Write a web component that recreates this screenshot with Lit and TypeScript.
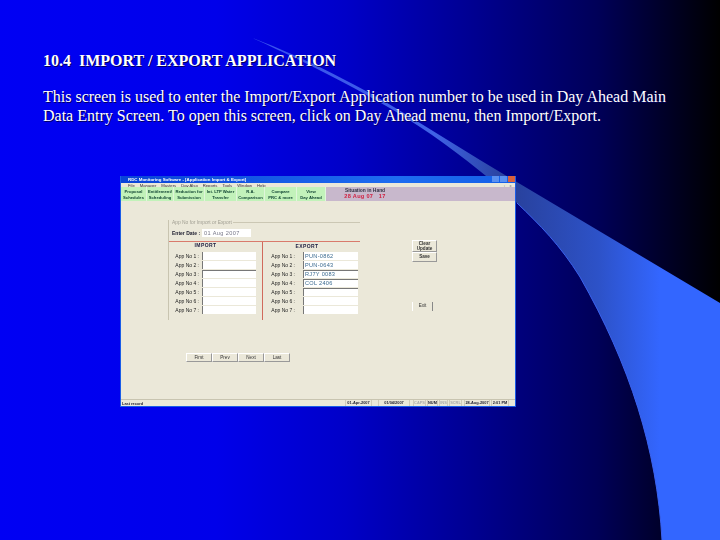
import { LitElement, html, css, svg } from "lit";
import { customElement } from "lit/decorators.js";

const tabs = [
  ["Proposal", "Schedules", 26],["Entitlement/", "Scheduling", 27],["Reduction for", "Submission", 31],["Int. LTP Water", "Transfer", 32],["R.A.", "Comparison", 28],["Compare", "PRC & more", 32],["View", "Day Ahead", 29],
] as const;
const imp = [1,2,3,4,5,6,7];
const exp = ["PUN-0862","PUN-0643","RJ7Y 0083","COL 2406","","",""];
const menus = ["File","Manager","Masters","Day Also","Reports","Tools","Window","Help"];
const stat = [
  ["01-Apr-2007", 27, 0, 0],["01/04/2007", 32, 6, 0],["CAPS", 13, 3, 1],["NUM", 11, 1, 0],["INS", 9, 1, 1],["SCRL", 13, 1, 1],["28-Aug-2007", 26, 2, 0],["2:01 PM", 18, 1, 0],
] as const;

@customElement("app-root")
export class AppRoot extends LitElement {
  static styles = css`
    :host { display: block; }
    .slide { position: relative; width: 720px; height: 540px; overflow: hidden; background: linear-gradient(90deg,#0000f4 0%,#0000ea 30%,#0000c8 48%,#000090 66%,#000058 83%,#000000 100%); font-family: "Liberation Serif", serif; color: #fff; box-sizing: border-box; padding: 52px 0 0 43px; }
    .bg { position: absolute; inset: 0; width: 720px; height: 540px; }
    .txt { position: relative; }
    h1 { margin: 0; font-size: 16px; line-height: 18px; font-weight: bold; text-shadow: 1px 1px 0 #000060; }
    p { margin: 18px 0 0; font-size: 16px; line-height: 18.5px; width: 630px; text-shadow: 1px 1px 0 #000060; }
    .win { position: absolute; left: 120px; top: 176px; width: 396px; height: 231px; background: #ebe8d9; font-family: "Liberation Sans", sans-serif; color: #223; display: flex; flex-direction: column; box-sizing: border-box; border: solid #1a5ce8; border-width: 0 1px 1px 1px; filter: blur(0.3px); }
    .title { height: 7px; background: linear-gradient(90deg,#0a44d8,#1e6cf0 70%,#1560e8); color: #fff; font-size: 4.4px; line-height: 7px; font-weight: bold; padding-left: 7px; display: flex; justify-content: space-between; flex: none; }
    .ctl { display: flex; gap: 1px; }
    .ctl i { width: 7px; height: 6px; background: #5a90f0; display: block; }
    .ctl i:last-child { background: #d9603c; }
    .menu { height: 4px; flex: none; font-size: 4.2px; line-height: 5px; display: flex; gap: 5px; padding-left: 7px; background: #ebe8d9; color: #333; white-space: nowrap; }
    .mini { margin-left: auto; padding-right: 2px; color: #777; letter-spacing: 1.5px; }
    .tabs { height: 14px; flex: none; background: #c8b8cc; display: flex; align-items: stretch; }
    .tab { background: #c2f2ba; border: solid #dff5da; border-width: 0 1px 0 0; box-sizing: border-box; font-size: 4.2px; line-height: 5.6px; text-align: center; color: #143; padding-top: 2px; font-weight: bold; white-space: nowrap; overflow: hidden; }
    .info { width: 48px; margin-left: 15px; text-align: center; font-size: 4.9px; line-height: 5.5px; color: #334; font-weight: bold; padding-top: 1px; white-space: nowrap; }
    .info b { display: block; color: #d02040; font-size: 5.6px; letter-spacing: .3px; }
    .body { flex: 1; display: flex; min-height: 0; padding: 19px 0 0 47px; box-sizing: border-box; position: relative; }
    .form { width: 192px; height: 100px; border-left: 1px solid #c8c4b0; display: flex; flex-direction: column; box-sizing: border-box; }
    .legend { font-size: 4.9px; line-height: 5px; color: #a09e92; display: flex; align-items: center; gap: 1px; white-space: nowrap; margin-left: 3px; }
    .legend::after { content: ""; flex: 1; height: 1px; background: #cbc7b4; }
    .date { display: flex; align-items: center; font-size: 5px; gap: 2px; margin: 4px 0 0 3px; height: 8px; font-weight: bold; white-space: nowrap; }
    .date span { background: #fff; width: 49px; height: 8px; line-height: 8px; font-size: 5.6px; color: #778; font-weight: normal; padding-left: 2px; letter-spacing: .4px; box-sizing: border-box; }
    .cols { flex: 1; display: grid; grid-template-columns: 93px 1fr; border-top: 1px solid #d97a6c; margin-top: 4px; }
    .col + .col { border-left: 1px solid #d06a5c; }
    .col h2 { margin: 0 0 3px; padding-right: 20px; height: 6px; font-size: 5px; line-height: 6px; color: #224; text-align: center; font-weight: bold; letter-spacing: .4px; }
    .col + .col h2 { padding-right: 9px; margin-top: 1px; margin-bottom: 2px; }
    .row { display: flex; align-items: center; height: 9px; font-size: 5px; color: #222; }
    .row label { width: 30px; text-align: right; margin-right: 3px; white-space: nowrap; flex: none; }
    .row span { flex: none; width: 54px; height: 8px; background: #fff; border-left: 1px solid #777; box-sizing: border-box; font-size: 5.6px; line-height: 8px; color: #3a6a90; padding-left: 1px; letter-spacing: .3px; white-space: nowrap; }
    .col + .col .row label { width: 32px; margin-right: 8px; }
    .col + .col .row span { width: 55px; }
    .row span.dk { border-top: 1px solid #777; line-height: 7px; }
    .side { display: flex; flex-direction: column; position: absolute; left: 291px; top: 39px; width: 25px; }
    .btn { background: #ebe8d9; border-right: 1px solid #999; border-bottom: 1px solid #999; border-top: 1px solid #fff; border-left: 1px solid #fff; box-sizing: border-box; font-size: 4.6px; line-height: 4.6px; text-align: center; color: #333; }
    .b1 { height: 12px; padding-top: 1px; font-weight: bold; }
    .b2 { height: 10px; line-height: 8px; font-weight: bold; }
    .exit { position: absolute; left: 291px; top: 101px; width: 21px; height: 9px; line-height: 8px; border-top: 0; border-bottom: 0; border-right: 1px solid #888; }
    .nav { position: absolute; left: 65px; top: 152px; display: flex; }
    .nav .btn { width: 26px; height: 9px; line-height: 7px; }
    .status { height: 7px; flex: none; border-top: 1px solid #c8c4b0; display: flex; align-items: center; font-size: 3.9px; font-weight: bold; color: #223; padding: 0 6px 0 1px; box-sizing: border-box; }
    .status .sp { flex: 1; }
    .status span { white-space: nowrap; }
    .status .c { border: solid #cfcbb9; border-width: 0 1px; text-align: center; height: 6px; line-height: 6px; box-sizing: border-box; overflow: hidden; }
    .status .c.off { color: #aaa; }
  `;
  render() {
    return html`<div class="slide">
      <svg class="bg" viewBox="0 0 720 540" aria-hidden="true">
        <defs>
          <linearGradient id="sw" gradientUnits="userSpaceOnUse" x1="250" y1="0" x2="660" y2="0">
            <stop offset="0" stop-color="#3850ee"/><stop offset="0.45" stop-color="#3f62e6"/><stop offset="0.63" stop-color="#28409a"/><stop offset="0.85" stop-color="#2d52c8"/><stop offset="1" stop-color="#3366ff"/>
          </linearGradient>
        </defs>
        ${svg`<path d="M250 37 C300 56 360 85 420 123 L480 160 L720 303 L720 540 L662 540 C657 450 630 365 580 277 C560 245 540 225 517 203 C490 178 455 150 420 127 C380 100 310 64 250 37 Z" fill="url(#sw)"/>
        <path d="M662 540 C657 450 630 365 580 277 C560 245 540 225 517 203" fill="none" stroke="#3a62f0" stroke-width="1"/>`}
      </svg>
      <div class="txt">
        <h1>10.4&nbsp; IMPORT / EXPORT APPLICATION</h1>
        <p>This screen is used to enter the Import/Export Application number to be used in Day Ahead Main Data Entry Screen. To open this screen, click on Day Ahead menu, then Import/Export.</p>
      </div>
      <div class="win">
        <div class="title"><span>RDC Monitoring Software - [Application Import &amp; Export]</span><span class="ctl"><i></i><i></i><i></i></span></div>
        <div class="menu">${menus.map(m=>html`<span>${m}</span>`)}<span class="mini">_ ▫ x</span></div>
        <div class="tabs">
          ${tabs.map(t=>html`<div class="tab" style="width:${t[2]}px">${t[0]}<br>${t[1]}</div>`)}
          <div class="info">Situation in Hand<b>28 Aug 07 &nbsp; 17</b></div>
        </div>
        <div class="body">
          <div class="form">
            <div class="legend">App No for Import or Export</div>
            <div class="date">Enter Date : <span>01 Aug 2007</span></div>
            <div class="cols">
              <div class="col"><h2>IMPORT</h2>${imp.map(n=>html`<div class="row"><label>App No ${n} :</label><span class="${n===3?"dk":""}"></span></div>`)}</div>
              <div class="col"><h2>EXPORT</h2>${exp.map((v,i)=>html`<div class="row"><label>App No ${i+1} :</label><span class="${i>=2&&i<=4?"dk":""}">${v}</span></div>`)}</div>
            </div>
          </div>
          <div class="side"><div class="btn b1">Clear<br>Update</div><div class="btn b2">Save</div></div>
          <div class="btn exit">Exit</div>
          <div class="nav">${["First","Prev","Next","Last"].map(b=>html`<div class="btn">${b}</div>`)}</div>
        </div>
        <div class="status"><span>Last record</span><span class="sp"></span>${stat.map(s=>html`<span class="c ${s[3]?"off":""}" style="width:${s[1]}px;margin-left:${s[2]}px">${s[0]}</span>`)}</div>
      </div>
    </div>`;
  }
}
